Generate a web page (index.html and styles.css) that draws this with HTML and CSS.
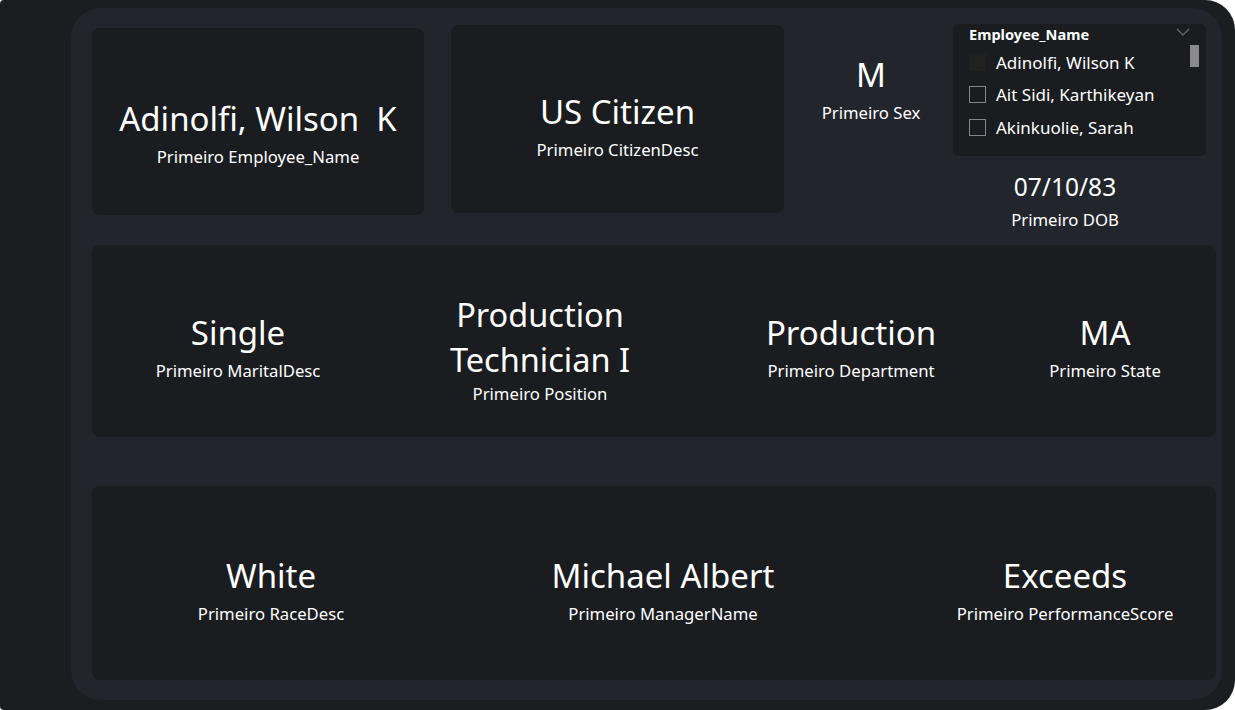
FILE: index.html
```html
<!DOCTYPE html>
<html>
<head>
<meta charset="utf-8">
<link rel="stylesheet" href="styles.css">
</head>
<body>
<div class="screen">
  <div class="panel">
    <div class="top-row">
      <div class="card card-name">
        <div class="kpi">
          <div class="value">Adinolfi, Wilson&nbsp; K</div>
          <div class="label">Primeiro Employee_Name</div>
        </div>
      </div>
      <div class="card card-citizen">
        <div class="kpi">
          <div class="value">US Citizen</div>
          <div class="label">Primeiro CitizenDesc</div>
        </div>
      </div>
      <div class="sex">
        <div class="kpi">
          <div class="value">M</div>
          <div class="label">Primeiro Sex</div>
        </div>
      </div>
      <div class="right-col">
        <div class="slicer">
          <div class="slicer-head">
            <span class="slicer-title">Employee_Name</span>
            <svg class="chev" width="14" height="8" viewBox="0 0 14 8"><path d="M1 1 L7 7 L13 1" fill="none" stroke="#6b6e73" stroke-width="1.1"/></svg>
          </div>
          <div class="slicer-body">
            <ul class="items">
              <li><span class="box box-filled"></span>Adinolfi, Wilson K</li>
              <li><span class="box"></span>Ait Sidi, Karthikeyan</li>
              <li><span class="box"></span>Akinkuolie, Sarah</li>
            </ul>
            <div class="scroll"></div>
          </div>
        </div>
        <div class="dob">
          <div class="kpi">
            <div class="value small">07/10/83</div>
            <div class="label">Primeiro DOB</div>
          </div>
        </div>
      </div>
    </div>

    <div class="card row2">
      <div class="cell">
        <div class="value">Single</div>
        <div class="label">Primeiro MaritalDesc</div>
      </div>
      <div class="cell">
        <div class="value tight">Production Technician I</div>
        <div class="label label-tight">Primeiro Position</div>
      </div>
      <div class="cell">
        <div class="value">Production</div>
        <div class="label">Primeiro Department</div>
      </div>
      <div class="cell">
        <div class="value">MA</div>
        <div class="label">Primeiro State</div>
      </div>
    </div>

    <div class="card row3">
      <div class="cell">
        <div class="value">White</div>
        <div class="label">Primeiro RaceDesc</div>
      </div>
      <div class="cell">
        <div class="value">Michael Albert</div>
        <div class="label">Primeiro ManagerName</div>
      </div>
      <div class="cell cell-last">
        <div class="value">Exceeds</div>
        <div class="label">Primeiro PerformanceScore</div>
      </div>
    </div>
  </div>
</div>
</body>
</html>
```

FILE: styles.css
```css
* { box-sizing: border-box; }
html, body {
  margin: 0;
  padding: 0;
  background: #ffffff;
}
body {
  font-family: "Noto Sans", "Open Sans", sans-serif;
  color: #ffffff;
  width: 1235px;
  height: 710px;
  overflow: hidden;
}
.screen {
  width: 1235px;
  height: 710px;
  background: #1b1d20;
  border-radius: 4px 30px 30px 4px;
  padding: 8px 0 0 71px;
}
.panel {
  width: 1151px;
  height: 692px;
  background: #23252d;
  border-radius: 30px;
  padding: 16px 6px 0 21px;
  display: flex;
  flex-direction: column;
}
.card {
  background: #1a1c1f;
  border-radius: 8px;
}
.kpi {
  display: flex;
  flex-direction: column;
  align-items: center;
  text-align: center;
}
.value {
  font-size: 33px;
  line-height: 40px;
  white-space: nowrap;
}
.value.small {
  font-size: 24.5px;
  line-height: 30px;
}
.value.tight {
  white-space: normal;
  line-height: 45px;
  font-size: 32.5px;
}
.label {
  font-size: 16.7px;
  line-height: 20px;
  margin-top: 8px;
}
.label.label-tight {
  margin-top: 3px;
  line-height: 18px;
}

/* top row */
.top-row {
  display: flex;
  height: 221px;
  align-items: flex-start;
}
.card-name {
  width: 332px;
  height: 187px;
  margin-top: 4px;
  display: flex;
  align-items: center;
  justify-content: center;
  padding-top: 23px;
}
.card-citizen {
  width: 333px;
  height: 188px;
  margin-left: 27px;
  margin-top: 1px;
  display: flex;
  align-items: center;
  justify-content: center;
  padding-top: 14px;
}
.sex {
  width: 169px;
  padding-top: 31px;
  padding-left: 5px;
  display: flex;
  justify-content: center;
}
.right-col {
  width: 253px;
  display: flex;
  flex-direction: column;
}
.slicer {
  height: 132px;
  background: #1a1c1f;
  border-radius: 5px;
  padding: 0 6px 0 16px;
}
.slicer-head {
  display: flex;
  justify-content: space-between;
  align-items: center;
  height: 20px;
}
.slicer-title {
  font-size: 14.6px;
  font-weight: 700;
}
.chev { margin-right: 10px; margin-top: -4px; }
.slicer-body {
  display: flex;
  justify-content: space-between;
}
.items {
  list-style: none;
  margin: 0;
  padding: 2px 0 0 0;
}
.items li {
  display: flex;
  align-items: center;
  font-size: 17px;
  height: 32.5px;
  white-space: nowrap;
}
.box {
  width: 17px;
  height: 17px;
  border: 1px solid #858585;
  margin-right: 10px;
  flex: none;
}
.box.box-filled {
  background: #222121;
  border-color: #222121;
}
.scroll {
  width: 9px;
  height: 22px;
  background: #8a8a8c;
  margin-top: 1px;
  margin-right: 1px;
}
.dob {
  display: flex;
  justify-content: center;
  padding-right: 29px;
  padding-top: 16px;
}

/* row 2 */
.row2 {
  height: 192px;
  display: grid;
  grid-template-columns: 292px 312px 310px 198px;
  align-items: center;
  padding-top: 12px;
}
.row3 {
  height: 194px;
  margin-top: 49px;
  display: grid;
  grid-template-columns: 358px 426px 1fr;
  align-items: center;
  padding-top: 14px;
}
.cell {
  display: flex;
  flex-direction: column;
  align-items: center;
  text-align: center;
}
.cell-last { padding-left: 38px; }
```
